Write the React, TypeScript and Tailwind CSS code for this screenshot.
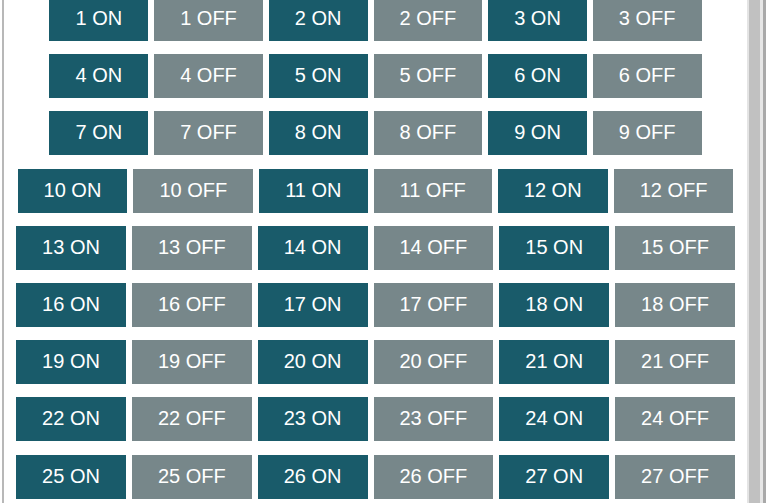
const rows = [
  [1, 2, 3],
  [4, 5, 6],
  [7, 8, 9],
  [10, 11, 12],
  [13, 14, 15],
  [16, 17, 18],
  [19, 20, 21],
  [22, 23, 24],
  [25, 26, 27],
];

function RelayButton({ label, on }: { label: string; on: boolean }) {
  return (
    <button
      className={
        on
          ? 'h-[44px] px-[26px] pb-[2px] bg-[#195B6A] text-white text-[20px] leading-none whitespace-nowrap'
          : 'h-[44px] px-[26px] pb-[2px] bg-[#77878A] text-white text-[20px] leading-none whitespace-nowrap'
      }
    >
      {label}
    </button>
  );
}

export default function App() {
  return (
    <div
      className="flex h-[503px] w-[768px] overflow-hidden bg-white"
      style={{ fontFamily: '"Liberation Sans", Arial, sans-serif' }}
    >
      <div className="w-[2px] bg-white" />
      <div className="w-[2px] bg-[#b8b8b8]" />

      <div className="flex-1 min-w-0">
        <div className="-mt-[3px] flex flex-col gap-[13.2px]">
          {rows.map((row) => (
            <div key={row[0]} className="flex justify-center gap-[6px]">
              {row.map((n) => (
                <div key={n} className="flex gap-[6px]">
                  <RelayButton label={`${n} ON`} on />
                  <RelayButton label={`${n} OFF`} on={false} />
                </div>
              ))}
            </div>
          ))}
        </div>
      </div>

      <div className="flex">
        <div className="w-[2px] bg-[#e4e4e4]" />
        <div className="w-[11px] bg-[#c1c1c1]" />
        <div className="w-[3px] bg-[#e6e6e6]" />
        <div className="w-[3px] bg-[#a9a9a9]" />
        <div className="w-[2px] bg-white" />
      </div>
    </div>
  );
}
